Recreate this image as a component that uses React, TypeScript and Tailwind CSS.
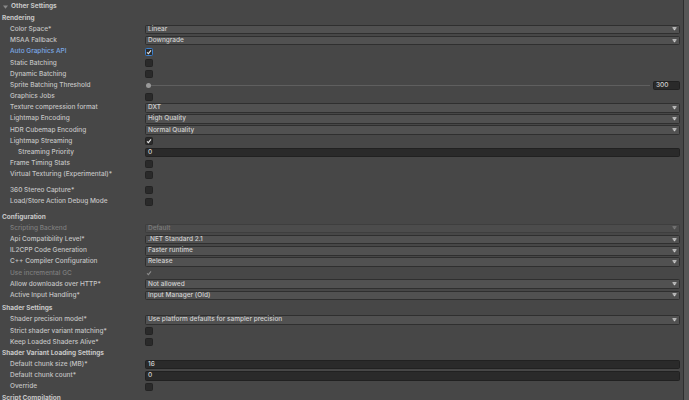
import React from "react";

type Row =
  | { k: "h"; t: string }
  | { k: "dd"; l: string; v: string; dis?: boolean; ind?: boolean }
  | { k: "cb"; l: string; on?: boolean; focus?: boolean; dis?: boolean; blue?: boolean }
  | { k: "tf"; l: string; v: string; ind?: boolean }
  | { k: "sl"; l: string; v: string }
  | { k: "sp"; h: string };

const rows: Row[] = [
  { k: "h", t: "Rendering" },
  { k: "dd", l: "Color Space*", v: "Linear" },
  { k: "dd", l: "MSAA Fallback", v: "Downgrade" },
  { k: "cb", l: "Auto Graphics API", on: true, focus: true, blue: true },
  { k: "cb", l: "Static Batching" },
  { k: "cb", l: "Dynamic Batching" },
  { k: "sl", l: "Sprite Batching Threshold", v: "300" },
  { k: "cb", l: "Graphics Jobs" },
  { k: "dd", l: "Texture compression format", v: "DXT" },
  { k: "dd", l: "Lightmap Encoding", v: "High Quality" },
  { k: "dd", l: "HDR Cubemap Encoding", v: "Normal Quality" },
  { k: "cb", l: "Lightmap Streaming", on: true },
  { k: "tf", l: "Streaming Priority", v: "0", ind: true },
  { k: "cb", l: "Frame Timing Stats" },
  { k: "cb", l: "Virtual Texturing (Experimental)*" },
  { k: "sp", h: "h-[4.4px]" },
  { k: "cb", l: "360 Stereo Capture*" },
  { k: "cb", l: "Load/Store Action Debug Mode" },
  { k: "sp", h: "h-[4.3px]" },
  { k: "h", t: "Configuration" },
  { k: "dd", l: "Scripting Backend", v: "Default", dis: true },
  { k: "dd", l: "Api Compatibility Level*", v: ".NET Standard 2.1" },
  { k: "dd", l: "IL2CPP Code Generation", v: "Faster runtime" },
  { k: "dd", l: "C++ Compiler Configuration", v: "Release" },
  { k: "cb", l: "Use incremental GC", on: true, dis: true },
  { k: "dd", l: "Allow downloads over HTTP*", v: "Not allowed" },
  { k: "dd", l: "Active Input Handling*", v: "Input Manager (Old)" },
  { k: "sp", h: "h-[2px]" },
  { k: "h", t: "Shader Settings" },
  { k: "dd", l: "Shader precision model*", v: "Use platform defaults for sampler precision" },
  { k: "cb", l: "Strict shader variant matching*" },
  { k: "cb", l: "Keep Loaded Shaders Alive*" },
  { k: "h", t: "Shader Variant Loading Settings" },
  { k: "tf", l: "Default chunk size (MB)*", v: "16" },
  { k: "tf", l: "Default chunk count*", v: "0" },
  { k: "cb", l: "Override" },
  { k: "h", t: "Script Compilation" },
];

function Arrow({ dim }: { dim?: boolean }) {
  return (
    <svg width="5" height="4" viewBox="0 0 5 4" className="shrink-0">
      <rect x="0.5" y="0" width="4" height="0.8" fill={dim ? "#7a7a7a" : "#d0d0d0"} />
      <path d="M0.5 1.2 L4.5 1.2 L2.5 3.6 Z" fill={dim ? "#7a7a7a" : "#d0d0d0"} />
    </svg>
  );
}

function Check({ dim }: { dim?: boolean }) {
  return (
    <svg width="6" height="6" viewBox="0 0 6 6">
      <path d="M1 3.3 L2.4 4.6 L5 1.4" fill="none" stroke={dim ? "#8c8c8c" : "#e6e6e6"} strokeWidth="1.1" />
    </svg>
  );
}

function Label({ text, ind, blue, dis }: { text: string; ind?: boolean; blue?: boolean; dis?: boolean }) {
  return (
    <div
      className={
        "w-[145px] shrink-0 whitespace-nowrap " +
        (ind ? "pl-[18px] " : "pl-[10px] ") +
        (blue ? "text-[#7ba9e6]" : dis ? "text-[#7e7e7e]" : "text-[#c4c4c4]")
      }
    >
      {text}
    </div>
  );
}

function RowView({ r }: { r: Row }) {
  if (r.k === "sp") return <div className={r.h} />;
  if (r.k === "h")
    return (
      <div className="h-[11.2px] flex items-center pl-[2px] font-bold text-[#c8c8c8] whitespace-nowrap">
        {r.t}
      </div>
    );
  return (
    <div className="h-[11.2px] flex items-center">
      <Label
        text={r.l}
        ind={"ind" in r ? r.ind : false}
        blue={r.k === "cb" ? r.blue : false}
        dis={"dis" in r ? r.dis : false}
      />
      <div className="flex-1 min-w-0 flex items-center h-full">
        {r.k === "dd" && (
          <div
            className={
              "w-full h-[9.6px] rounded-[1.5px] border flex items-center justify-between pl-[2px] pr-[2px] " +
              (r.dis
                ? "bg-[#4c4c4c] border-[#3e3e3e] text-[#7e7e7e]"
                : "bg-[#515151] border-[#2f2f2f] text-[#d2d2d2]")
            }
          >
            <span className="whitespace-nowrap">{r.v}</span>
            <Arrow dim={r.dis} />
          </div>
        )}
        {r.k === "tf" && (
          <div className="w-full h-[9.6px] rounded-[1.5px] border border-[#212121] bg-[#2a2a2a] flex items-center pl-[2px] text-[#d2d2d2]">
            {r.v}
          </div>
        )}
        {r.k === "cb" && (
          <div
            className={
              "w-[8px] h-[8px] rounded-[1.5px] border flex items-center justify-center " +
              (r.dis
                ? "bg-[#474747] border-[#474747]"
                : r.focus
                ? "bg-[#2a2a2a] border-[#3a7ecb]"
                : "bg-[#2a2a2a] border-[#232323]")
            }
          >
            {r.on && <Check dim={r.dis} />}
          </div>
        )}
        {r.k === "sl" && (
          <div className="w-full flex items-center gap-[3px]">
            <div className="flex-1 relative h-[6px] flex items-center">
              <div className="w-full h-[1.5px] bg-[#5f5f5f] ml-[2px]" />
              <div className="absolute left-[1px] top-[0.5px] w-[5px] h-[5px] rounded-full bg-[#999999]" />
            </div>
            <div className="w-[27px] h-[9.6px] rounded-[1.5px] border border-[#212121] bg-[#2a2a2a] flex items-center pl-[2px] text-[#d2d2d2]">
              {r.v}
            </div>
          </div>
        )}
      </div>
    </div>
  );
}

export default function App() {
  return (
    <div
      className="w-[689px] h-[400px] overflow-hidden bg-[#474747] flex text-[6.5px] leading-[9px] font-medium"
      style={{ fontFamily: "Inter, 'Noto Sans', sans-serif" }}
    >
      <div className="flex-1 min-w-0 flex flex-col pr-[3px]">
        <div className="h-[12.7px] shrink-0 flex items-center pt-[1px] pl-[3px] gap-[3px] font-bold text-[#c8c8c8]">
          <svg width="5" height="4" viewBox="0 0 5 4">
            <path d="M0 0.5 L5 0.5 L2.5 3.8 Z" fill="#8a8a8a" />
          </svg>
          <span>Other Settings</span>
        </div>
        {rows.map((r, i) => (
          <div key={i} className="shrink-0">
            <RowView r={r} />
          </div>
        ))}
      </div>
      <div className="w-[6px] h-full border-l border-[#2e2e2e] bg-[#575757]" />
    </div>
  );
}
